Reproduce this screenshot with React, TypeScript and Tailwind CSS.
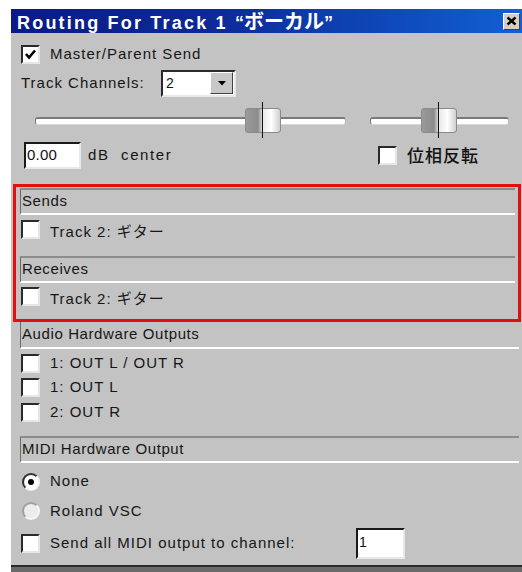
import React from "react";

const ui = { fontFamily: '"Liberation Sans", Arial, "Noto Sans CJK JP", sans-serif' };
const jp = { fontFamily: '"Noto Sans CJK JP", "Liberation Sans", sans-serif' };

function CheckBox({ checked = false }: { checked?: boolean }) {
  return (
    <div className="relative w-[19px] h-[19px] shrink-0 bg-white border-2 border-t-[#2a2a2a] border-l-[#2a2a2a] border-r-[#e6e6e6] border-b-[#e6e6e6]">
      {checked && (
        <svg className="absolute left-[1px] top-[1px]" width="13" height="13" viewBox="0 0 13 13">
          <path d="M2 6 L5 9.5 L11 2.5" fill="none" stroke="#000" strokeWidth="2.6" />
        </svg>
      )}
    </div>
  );
}

function Radio({ selected = false, faded = false }: { selected?: boolean; faded?: boolean }) {
  return (
    <div
      className={
        faded
          ? "w-[18px] h-[18px] shrink-0 rounded-full bg-[#ececec] border-2 border-t-[#a0a0a0] border-l-[#a0a0a0] border-r-[#f6f6f6] border-b-[#f6f6f6]"
          : "w-[18px] h-[18px] shrink-0 rounded-full bg-white border-2 border-t-[#303030] border-l-[#303030] border-r-[#f4f4f4] border-b-[#f4f4f4] flex items-center justify-center"
      }
    >
      {selected && <div className="w-[6px] h-[6px] rounded-full bg-black" />}
    </div>
  );
}

function Header({ label, noTop = false }: { label: string; noTop?: boolean }) {
  return (
    <div
      className={
        "ml-[9px] mr-[3px] h-[27px] flex items-center pl-[1px] border-l border-l-[#6a6a6a] border-b-2 border-b-white " +
        (noTop ? "" : "border-t-2 border-t-[#8c8c8c]")
      }
    >
      <span className="text-[15px] tracking-[0.6px] text-[#161616]">{label}</span>
    </div>
  );
}

function CheckRow({ label, h, checked = false }: { label: React.ReactNode; h: string; checked?: boolean }) {
  return (
    <div className={"flex items-center pl-[10px] gap-[10px] " + h}>
      <CheckBox checked={checked} />
      <span className="text-[15px] tracking-[1px] text-[#161616] whitespace-nowrap">{label}</span>
    </div>
  );
}

function Slider({
  trackLeft,
  trackRight,
  thumbLeft,
}: {
  trackLeft: number;
  trackRight: number;
  thumbLeft: number;
}) {
  const w = trackRight - trackLeft;
  return (
    <div className="relative h-[44px]" style={{ width: w }}>
      {/* groove */}
      <div className="absolute left-0 right-0 top-[19px] h-[8px] rounded-[3px] bg-white border border-t-2 border-t-[#7a7a7a] border-l-[#7a7a7a] border-r-[#b8b8b8] border-b-[#d8d8d8]" />
      {/* thumb */}
      <div
        className="absolute top-[10px] h-[25px] w-[36px] rounded-[3px] border border-[#8a8a8a] bg-[linear-gradient(90deg,#9a9a9a_0%,#8c8c8c_35%,#e8e8e8_50%,#ffffff_75%,#cfcfcf_100%)]"
        style={{ left: thumbLeft - trackLeft }}
      />
      {/* center tick */}
      <div
        className="absolute top-[4px] h-[36px] w-[1px] bg-[#111]"
        style={{ left: thumbLeft - trackLeft + 17 }}
      />
    </div>
  );
}

export default function App() {
  return (
    <div className="w-[522px] h-[572px] bg-white overflow-hidden" style={ui}>
      <div className="ml-[11px] mt-[9px] w-[511px] flex flex-col">
        {/* title bar */}
        <div className="h-[24px] flex items-center justify-between bg-[linear-gradient(90deg,#0a1b84_0%,#0c2a98_40%,#1160d4_100%)]">
          <span className="pl-[6px] text-[18px] font-bold tracking-[2.2px] text-white whitespace-nowrap">
            Routing For Track 1{" "}
            <span className="tracking-[0px]">“</span>
            <span style={jp} className="text-[20px] tracking-[0px]">
              ボーカル
            </span>
            ”
          </span>
          <div className="mr-[2px] w-[17px] h-[17px] bg-[#d4d0c8] border border-t-white border-l-white border-r-[#404040] border-b-[#404040] flex items-center justify-center">
            <svg width="11" height="10" viewBox="0 0 11 10">
              <path d="M1.5 1.5 L9.5 8.5 M9.5 1.5 L1.5 8.5" stroke="#000" strokeWidth="2.4" />
            </svg>
          </div>
        </div>

        {/* dialog body */}
        <div className="bg-[#c3c3c3] h-[532px] flex flex-col">
          <div className="h-[7px]" />
          <CheckRow label="Master/Parent Send" h="h-[28px]" checked />

          {/* track channels */}
          <div className="h-[30px] flex items-center pl-[10px]">
            <span className="text-[15px] tracking-[1px] text-[#161616] w-[140px]">Track Channels:</span>
            <div className="w-[75px] h-[27px] bg-white border-2 border-t-[#2a2a2a] border-l-[#2a2a2a] border-r-[#e8e8e8] border-b-[#e8e8e8] flex items-center">
              <span className="pl-[3px] text-[14px] text-[#111] flex-1">2</span>
              <div className="w-[23px] h-[22px] mr-[1px] bg-[#c8c8c8] border border-t-white border-l-white border-r-[#404040] border-b-[#404040] flex items-center justify-center">
                <svg width="8" height="5" viewBox="0 0 8 5">
                  <path d="M0 0 H8 L4 4.5 Z" fill="#000" />
                </svg>
              </div>
            </div>
          </div>

          {/* volume + pan sliders */}
          <div className="h-[44px] flex items-start pl-[24px] gap-[24px]">
            <Slider trackLeft={35} trackRight={346} thumbLeft={245} />
            <Slider trackLeft={370} trackRight={509} thumbLeft={421} />
          </div>

          {/* volume value + phase invert */}
          <div className="h-[26px] flex items-center pl-[13px]">
            <div className="w-[57px] h-[27px] bg-white border-2 border-t-[#1a1a1a] border-l-[#1a1a1a] border-r-[#e8e8e8] border-b-[#e8e8e8] flex items-center">
              <span className="pl-[1px] text-[15px] tracking-[0.2px] text-[#111]">0.00</span>
            </div>
            <span className="ml-[7px] text-[15px] tracking-[1.6px] text-[#161616] whitespace-pre">dB  center</span>
            <div className="ml-auto mr-[43px] flex items-center gap-[10px]">
              <CheckBox />
              <span className="text-[17px] tracking-[1px] font-medium text-[#111]" style={jp}>
                位相反転
              </span>
            </div>
          </div>

          {/* sends / receives */}
          <div className="mt-[16px] ml-[2px] mr-[1px] h-[138px] border-[3px] border-[#e01010] flex flex-col">
            <div className="h-[1px]" />
            <div className="-ml-[5px]">
              <Header label="Sends" />
            </div>
            <div className="h-[41px] flex items-start pt-[5px] pl-[5px] gap-[10px]">
              <CheckBox />
              <span className="text-[15px] tracking-[1px] text-[#161616] whitespace-nowrap">
                Track 2: <span style={jp}>ギター</span>
              </span>
            </div>
            <div className="-ml-[5px]">
              <Header label="Receives" />
            </div>
            <div className="h-[34px] flex items-start pt-[4px] pl-[5px] gap-[10px]">
              <CheckBox />
              <span className="text-[15px] tracking-[1px] text-[#161616] whitespace-nowrap">
                Track 2: <span style={jp}>ギター</span>
              </span>
            </div>
          </div>

          {/* audio outputs */}
          <Header label="Audio Hardware Outputs" noTop />
          <div className="h-[2px]" />
          <CheckRow label="1: OUT L / OUT R" h="h-[24px]" />
          <CheckRow label="1: OUT L" h="h-[25px]" />
          <CheckRow label="2: OUT R" h="h-[24px]" />
          <div className="h-[12px]" />

          {/* midi output */}
          <Header label="MIDI Hardware Output" />
          <div className="h-[5px]" />
          <div className="h-[27px] flex items-center pl-[11px] gap-[10px]">
            <Radio selected />
            <span className="text-[15px] tracking-[1px] text-[#161616]">None</span>
          </div>
          <div className="h-[32px] flex items-center pl-[11px] gap-[10px]">
            <Radio faded />
            <span className="text-[15px] tracking-[1px] text-[#161616]">Roland VSC</span>
          </div>
          <div className="h-[32px] flex items-center pl-[10px]">
            <CheckBox />
            <span className="ml-[10px] text-[15px] tracking-[1px] text-[#161616] whitespace-nowrap w-[306px]">
              Send all MIDI output to channel:
            </span>
            <div className="w-[49px] h-[31px] bg-white border-2 border-t-[#1a1a1a] border-l-[#1a1a1a] border-r-[#e8e8e8] border-b-[#e8e8e8]">
              <span className="pl-[1px] text-[14px] text-[#111]">1</span>
            </div>
          </div>
        </div>
        <div className="h-[2px] bg-[#2a2a2a]" />
        <div className="h-[6px] bg-[#6a6a6a]" />
      </div>
    </div>
  );
}
